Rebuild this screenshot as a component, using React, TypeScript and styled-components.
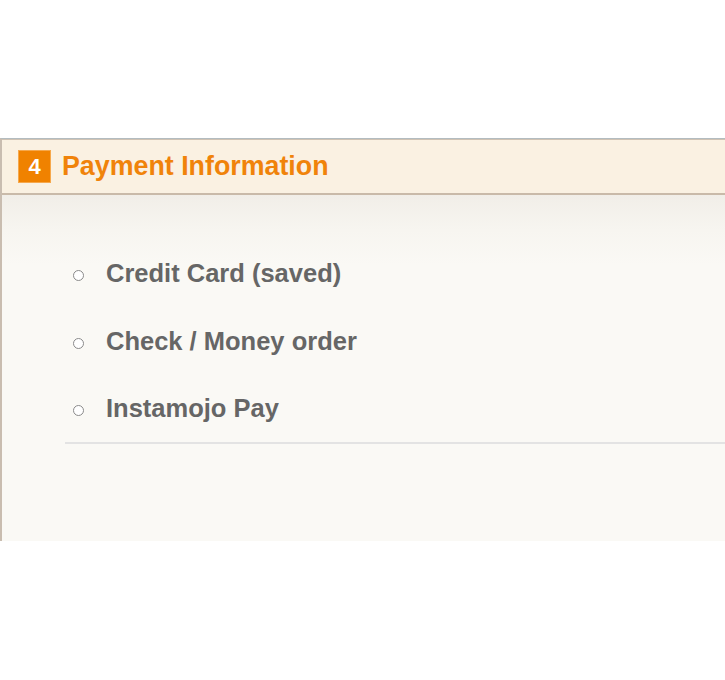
import React from "react";
import styled, { createGlobalStyle } from "styled-components";

const Global = createGlobalStyle`
  html, body { margin: 0; padding: 0; background: #ffffff; }
  body { font-family: "Liberation Sans", Arial, sans-serif; }
`;

const Page = styled.div`
  width: 725px;
  height: 680px;
  overflow: hidden;
  padding-top: 138px;
  box-sizing: border-box;
`;

const Panel = styled.section`
  border-top: 1px solid #b3bcc0;
  border-left: 2px solid #c9bdb0;
`;

const Header = styled.header`
  display: flex;
  align-items: center;
  gap: 11px;
  height: 53px;
  padding-left: 16px;
  background: #faf1e2;
  border-top: 1px solid #cfc2b3;
  border-bottom: 2px solid #c9baa9;
`;

const Badge = styled.span`
  display: flex;
  align-items: center;
  justify-content: center;
  width: 31px;
  height: 31px;
  background: #f08200;
  border: 1px solid #f6a84c;
  color: #ffffff;
  font-weight: bold;
  font-size: 22px;
  line-height: 1;
`;

const Title = styled.h2`
  margin: 0;
  color: #f0830a;
  font-size: 26.8px;
  font-weight: bold;
  line-height: 31px;
`;

const Body = styled.div`
  height: 346px;
  background: linear-gradient(#f1eee8 0px, #f7f5f0 35px, #faf9f5 70px, #faf9f5 100%);
  padding: 63px 0 0 63px;
  box-sizing: border-box;
`;

const Options = styled.ul`
  list-style: none;
  margin: 0;
  padding: 0 0 19px 0;
  display: flex;
  flex-direction: column;
  gap: 37.5px;
  border-bottom: 2px solid #e3e3e3;
`;

const Option = styled.li`
  display: flex;
  align-items: flex-start;
  gap: 22px;
  padding-left: 8px;
  height: 30px;
`;

const Radio = styled.span`
  flex: none;
  width: 11px;
  height: 11px;
  margin-top: 12px;
  box-sizing: border-box;
  border-radius: 50%;
  border: 1px solid #8a8a8a;
  background: #ffffff;
`;

const Label = styled.span`
  color: #666666;
  font-size: 25.5px;
  font-weight: bold;
  line-height: 30px;
  white-space: nowrap;
`;

const methods = ["Credit Card (saved)", "Check / Money order", "Instamojo Pay"];

export default function App() {
  return (
    <>
      <Global />
      <Page>
        <Panel>
          <Header>
            <Badge>4</Badge>
            <Title>Payment Information</Title>
          </Header>
          <Body>
            <Options>
              {methods.map((m) => (
                <Option key={m}>
                  <Radio />
                  <Label>{m}</Label>
                </Option>
              ))}
            </Options>
          </Body>
        </Panel>
      </Page>
    </>
  );
}
